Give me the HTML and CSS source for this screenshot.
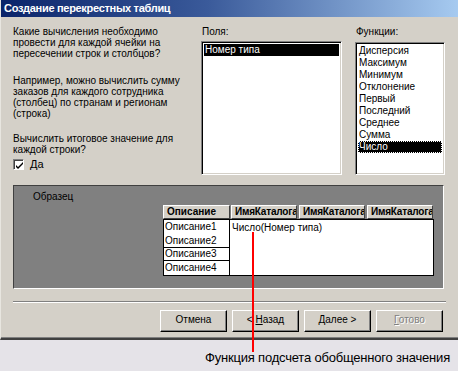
FILE: index.html
```html
<!DOCTYPE html>
<html lang="ru">
<head>
<meta charset="utf-8">
<title>Создание перекрестных таблиц</title>
<link rel="stylesheet" href="styles.css">
</head>
<body>
<div class="window">
  <div class="titlebar">Создание перекрестных таблиц</div>
  <div class="top">
    <div class="intro">
      <p class="para p1">Какие вычисления необходимо<br>провести для каждой ячейки на<br>пересечении строк и столбцов?</p>
      <p class="para p2">Например, можно вычислить сумму<br>заказов для каждого сотрудника<br>(столбец) по странам и регионам<br>(строка)</p>
      <p class="para p3">Вычислить итоговое значение для<br>каждой строки?</p>
      <label class="check"><span class="box"><svg width="7" height="7" viewBox="0 0 7 7"><path d="M0 3 L2 5 L7 0 L7 2 L2 7 L0 5 Z" fill="#000"/></svg></span><span><u>Д</u>а</span></label>
    </div>
    <div class="col fields">
      <div class="label">Поля:</div>
      <div class="listbox">
        <div class="item sel">Номер типа</div>
      </div>
    </div>
    <div class="col funcs">
      <div class="label">Функции:</div>
      <div class="listbox">
        <div class="item">Дисперсия</div>
        <div class="item">Максимум</div>
        <div class="item">Минимум</div>
        <div class="item">Отклонение</div>
        <div class="item">Первый</div>
        <div class="item">Последний</div>
        <div class="item">Среднее</div>
        <div class="item">Сумма</div>
        <div class="item sel focus">Число</div>
      </div>
    </div>
  </div>
  <div class="sample">
    <div class="sample-label">Образец</div>
    <div class="grid">
      <div class="desc-col">
        <div class="hcell">Описание</div>
        <div class="dcell tall">Описание1<br>Описание2</div>
        <div class="dcell">Описание3</div>
        <div class="dcell last">Описание4</div>
      </div>
      <div class="data-col">
        <div class="heads">
          <div class="hcell">ИмяКаталога</div>
          <div class="hcell">ИмяКаталога</div>
          <div class="hcell">ИмяКаталога</div>
        </div>
        <div class="value">Число(Номер типа)</div>
      </div>
    </div>
  </div>
  <div class="separator"></div>
  <div class="buttons">
    <div class="btn">Отмена</div>
    <div class="btn">&lt; <u>Н</u>азад</div>
    <div class="btn"><u>Д</u>алее &gt;</div>
    <div class="btn disabled"><u>Г</u>отово</div>
  </div>
</div>
<div class="caption">Функция подсчета обобщенного значения</div>
<div class="pointer"></div>
</body>
</html>
```
FILE: styles.css
```css
* { box-sizing: border-box; }
html, body { margin: 0; padding: 0; }
body {
  width: 458px;
  height: 371px;
  background: #e5e3e8;
  font-family: "Liberation Sans", Arial, sans-serif;
  font-size: 10px;
  color: #000;
  position: relative;
  overflow: hidden;
}
.window {
  background: #d4d0c8;
  height: 340px;
  border-bottom: 2px solid #404040;
  box-shadow: inset 0 -1px 0 #808080;
  border-left: 1px solid #e8e6e0;
}
.titlebar {
  height: 17px;
  line-height: 17px;
  padding-left: 3px;
  color: #fff;
  font-weight: bold;
  font-size: 11px;
  letter-spacing: -0.3px;
  background: linear-gradient(to right, #0a246a 0%, #3a5a9a 45%, #a6caf0 100%);
  white-space: nowrap;
}
.top {
  display: flex;
  padding: 9px 0 0 12px;
  height: 158px;
}
.intro { width: 188px; }
.para { margin: 0; line-height: 11px; }
.p2 { margin-top: 16px; }
.p3 { margin-top: 14px; }
.check {
  display: flex;
  align-items: center;
  gap: 6px;
  margin-top: 4px;
  line-height: 11px;
  font-size: 11px;
}
.box {
  width: 11px;
  height: 11px;
  background: #fff;
  border: 1px solid;
  border-color: #808080 #fff #fff #808080;
  box-shadow: inset 1px 1px #404040;
  display: flex;
  align-items: center;
  justify-content: center;
  padding: 1px 0 0 1px;
}
.col { display: flex; flex-direction: column; }
.label { line-height: 11px; height: 11px; margin-bottom: 4px; padding-left: 1px; }
.fields { width: 141px; }
.funcs { width: 90px; margin-left: 13px; }
.funcs .label { margin-bottom: 5px; }
.listbox {
  flex: 1;
  background: #fff;
  border: 1px solid;
  border-color: #808080 #fff #fff #808080;
  box-shadow: inset 1px 1px #000, inset -1px -1px #d4d0c8;
  padding: 2px 2px;
  overflow: hidden;
}
.item {
  height: 12px;
  line-height: 12px;
  padding-left: 1px;
  white-space: nowrap;
}
.item.sel { background: #000; color: #fff; }
.item.focus { outline: 1px dotted #fff; outline-offset: -1px; }
.sample {
  margin: 10px 14px 0 12px;
  height: 104px;
  background: #808080;
  border: 1px solid;
  border-color: #404040 #fff #fff #404040;
  padding: 5px 0 0 19px;
}
.sample-label { line-height: 11px; height: 14px; }
.grid {
  display: flex;
  margin-left: 130px;
}
.hcell {
  height: 14px;
  line-height: 12px;
  background: #d4d0c8;
  border: 1px solid;
  border-color: #fff #404040 #404040 #fff;
  font-weight: bold;
  font-size: 10px;
  padding-left: 3px;
  white-space: nowrap;
  overflow: hidden;
}
.desc-col { width: 67px; }
.dcell {
  background: #fff;
  border: 1px solid #000;
  border-top: none;
  height: 13px;
  line-height: 12px;
  padding-left: 1px;
}
.dcell.tall { height: 29px; line-height: 14px; border-top: 1px solid #000; }
.dcell.last { height: 15px; line-height: 14px; }
.data-col { width: 204px; display: flex; flex-direction: column; }
.heads { display: flex; gap: 2px; padding-left: 1px; }
.heads .hcell { width: 66px; letter-spacing: -0.2px; }
.value {
  background: #fff;
  border: 1px solid #000;
  border-left: none;
  height: 57px;
  padding: 2px 0 0 2px;
  line-height: 12px;
}
.separator {
  margin: 12px 12px 0 12px;
  height: 2px;
  border-top: 1px solid #808080;
  border-bottom: 1px solid #fff;
}
.buttons {
  display: flex;
  justify-content: flex-end;
  gap: 5px;
  padding: 7px 15px 0 0;
}
.btn {
  width: 67px;
  height: 22px;
  line-height: 18px;
  text-align: center;
  background: #d4d0c8;
  border: 1px solid;
  border-color: #fff #000 #000 #fff;
  box-shadow: inset -1px -1px #808080;
  font-size: 10px;
}
.btn.disabled { color: #808080; text-shadow: 1px 1px #fff; }
.caption {
  text-align: right;
  padding-right: 8px;
  margin-top: 10px;
  font-size: 13px;
  letter-spacing: -0.2px;
  line-height: 16px;
  white-space: nowrap;
}
.pointer {
  position: absolute;
  left: 252px;
  top: 232px;
  width: 2px;
  height: 120px;
  background: #f00;
}
```
